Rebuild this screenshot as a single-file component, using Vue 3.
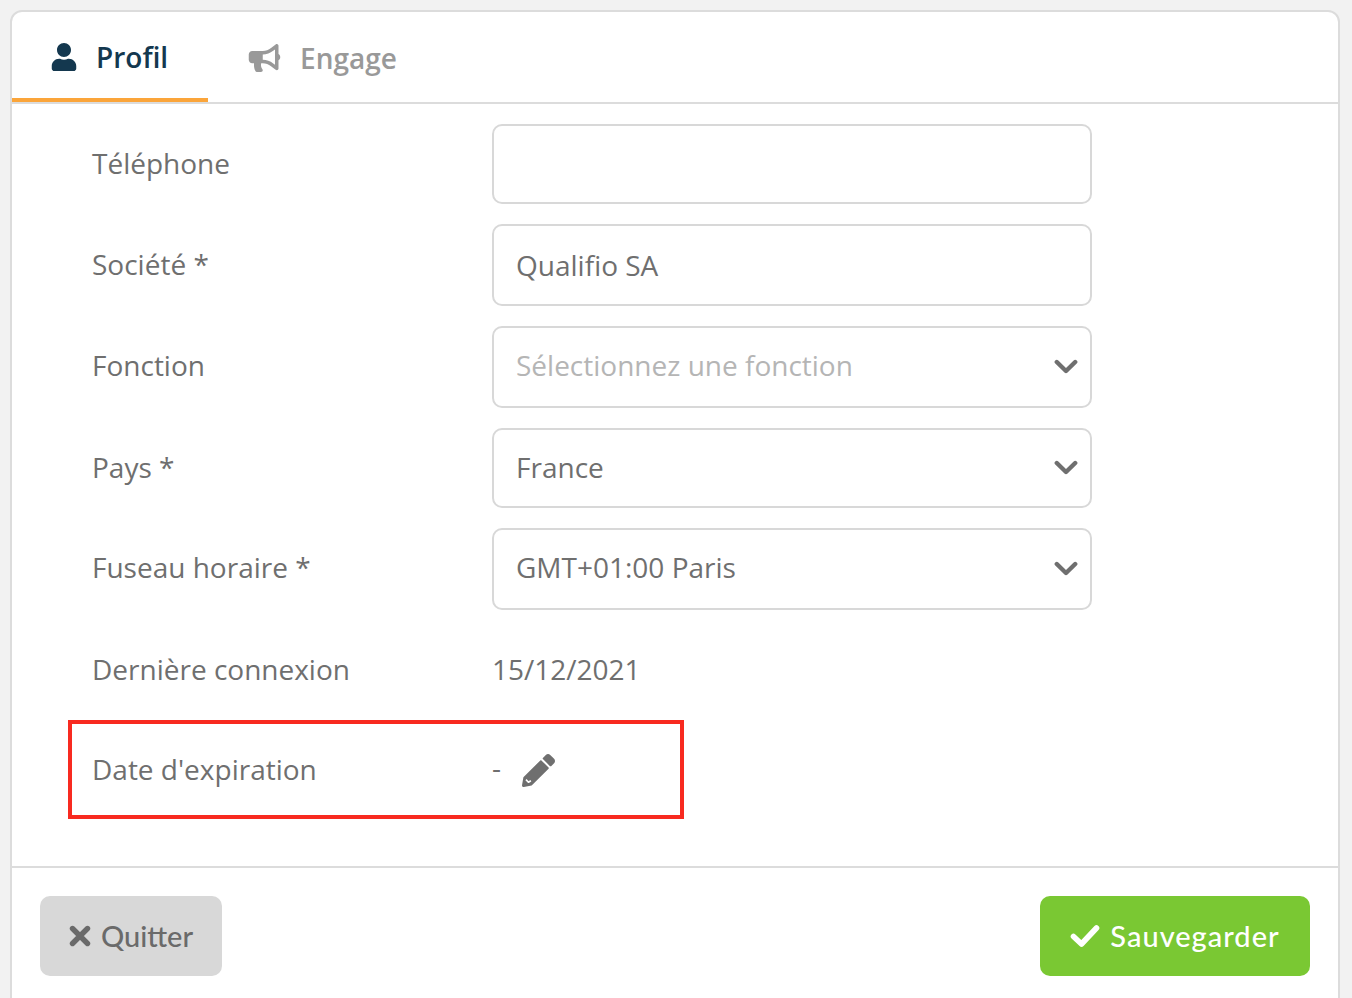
<script setup>
const rows = [
  { label: 'Téléphone', type: 'input', value: '' },
  { label: 'Société *', type: 'input', value: 'Qualifio SA', tall: true, low: true },
  { label: 'Fonction', type: 'select', value: 'Sélectionnez une fonction', placeholder: true, tall: true },
  { label: 'Pays *', type: 'select', value: 'France' },
  { label: 'Fuseau horaire *', type: 'select', value: 'GMT+01:00 Paris', tall: true },
]
</script>

<template>
  <div class="page">
    <section class="card">
      <nav class="tabs">
        <div class="tab active">
          <svg class="tab-icon user" viewBox="0 0 448 512"><path fill="currentColor" d="M224 256c70.700 0 128-57.300 128-128S294.700 0 224 0 96 57.300 96 128s57.300 128 128 128zm89.600 32h-16.700c-22.200 10.200-46.900 16-72.900 16s-50.600-5.800-72.900-16h-16.700C60.200 288 0 348.200 0 422.400V464c0 26.500 21.500 48 48 48h352c26.500 0 48-21.500 48-48v-41.600c0-74.200-60.200-134.400-134.400-134.400z"/></svg>
          <span>Profil</span>
        </div>
        <div class="tab">
          <svg class="tab-icon horn" viewBox="0 0 576 512"><path fill="currentColor" d="M576 240c0-23.630-12.950-44.040-32-55.120V32.010C544 23.260 537.020 0 512 0c-7.120 0-14.190 2.380-19.980 7.020l-85.030 68.030C364.280 109.190 310.660 128 256 128H64c-35.350 0-64 28.650-64 64v96c0 35.350 28.650 64 64 64h33.700c-1.390 10.480-2.180 21.140-2.180 32 0 39.770 9.260 77.350 25.560 110.940 5.190 10.690 16.520 17.060 28.400 17.060h74.280c26.050 0 41.690-29.840 25.900-50.560-16.400-21.520-26.150-48.360-26.150-77.440 0-11.110 1.620-21.790 4.410-32H256c54.660 0 108.280 18.810 150.980 52.950l85.030 68.030a32.023 32.023 0 0 0 19.980 7.020c24.920 0 32-22.760 32-32V295.130C563.050 284.040 576 263.630 576 240zm-96 141.420l-33.050-26.440C392.950 311.780 325.120 288 256 288v-96c69.120 0 136.950-23.780 190.950-66.980L480 98.580v282.840z"/></svg>
          <span>Engage</span>
        </div>
      </nav>

      <div class="form">
        <div v-for="row in rows" :key="row.label" class="row" :class="{ tall: row.tall, low: row.low }">
          <label class="label">{{ row.label }}</label>
          <div class="field" :class="{ placeholder: row.placeholder }">
            <span class="field-text">{{ row.value }}</span>
            <svg v-if="row.type === 'select'" class="chevron" viewBox="0 0 24 16"><path d="M2.800 3 12 12 21.200 3" fill="none" stroke="currentColor" stroke-width="4.400" stroke-linecap="round" stroke-linejoin="round"/></svg>
          </div>
        </div>
        <div class="row static">
          <span class="label">Dernière connexion</span>
          <span class="value">15/12/2021</span>
        </div>
        <div class="row static expire">
          <span class="label">Date d'expiration</span>
          <span class="value dash">-</span>
          <svg class="pencil" viewBox="0 0 512 512">
            <path fill="currentColor" d="M497.900 142.100l-46.100 46.100c-4.700 4.700-12.300 4.700-17 0l-111-111c-4.700-4.700-4.700-12.300 0-17l46.100-46.100c18.700-18.700 49.100-18.700 67.900 0l60.100 60.100c18.800 18.700 18.800 49.100 0 67.900zM284.200 99.800L21.600 362.400.4 483.900c-2.900 16.400 11.400 30.600 27.800 27.800l121.500-21.300 262.600-262.600c4.700-4.700 4.700-12.300 0-17l-111-111c-4.800-4.700-12.400-4.700-17.100 0z"/>
            <path d="M62 398l38 40 38-22" fill="none" stroke="#fff" stroke-width="26" stroke-linejoin="round"/>
          </svg>
          <div class="highlight"></div>
        </div>
      </div>

      <footer class="footer">
        <button class="btn quit">
          <svg class="btn-icon" viewBox="0 0 22 22"><path d="M3.500 3.500l15 15m0-15l-15 15" fill="none" stroke="currentColor" stroke-width="5.400" stroke-linecap="round"/></svg>
          <span class="btn-text">Quitter</span>
        </button>
        <button class="btn save">
          <svg class="btn-icon check" viewBox="0 0 30 24"><path d="M3.500 12.500 11.500 20 26.500 4" fill="none" stroke="currentColor" stroke-width="5.600" stroke-linecap="round" stroke-linejoin="round"/></svg>
          <span class="btn-text save-text">Sauvegarder</span>
        </button>
      </footer>
    </section>
  </div>
</template>

<style>
html, body { margin: 0; background: #f2f2f2; }
</style>

<style scoped>
.page {
  height: 998px;
  overflow: hidden;
  box-sizing: border-box;
  padding: 10px 12px 0 10px;
  font-family: "Open Sans", "Liberation Sans", sans-serif;
  color: #6f6f6f;
}
.card {
  height: 1010px;
  box-sizing: border-box;
  background: #fff;
  border: 2px solid #dcdcdc;
  border-radius: 12px;
  overflow: hidden;
}
.tabs {
  display: flex;
  height: 92px;
  box-sizing: border-box;
  border-bottom: 2px solid #dcdcdc;
}
.tab {
  display: flex;
  align-items: center;
  gap: 19px;
  height: 90px;
  box-sizing: border-box;
  padding: 2px 40px 0;
  font-size: 28px;
  font-weight: 600;
  color: #999;
}
.tab.active {
  width: 196px;
  padding: 4px 0 0 39px;
  color: #14384f;
  border-bottom: 4px solid #fba53a;
}
.tab-icon { flex: none; }
.user { width: 26px; height: 28px; }
.horn { width: 33px; height: 28px; }
.form {
  display: flex;
  flex-direction: column;
  gap: 20px;
  padding: 20px 0 0 80px;
  height: 764px;
  box-sizing: border-box;
  border-bottom: 2px solid #dcdcdc;
}
.row {
  display: grid;
  grid-template-columns: 400px 600px;
  align-items: center;
  height: 80px;
  font-size: 28px;
}
.row.tall { height: 82px; }
.label { color: #6f6f6f; padding-bottom: 2px; }
.tall .label { padding-bottom: 4px; }
.tall.low .label { padding-bottom: 2px; }
.value { padding-bottom: 2px; }
.field {
  height: 100%;
  box-sizing: border-box;
  padding: 0 12px 0 22px;
  display: flex;
  align-items: center;
  justify-content: space-between;
  border: 2px solid #d8d8d8;
  border-radius: 10px;
  background: #fff;
}
.field-text { padding-bottom: 2px; }
.tall .field-text { padding-bottom: 4px; }
.tall.low .field-text { padding-bottom: 0; }
.placeholder span { color: #b5b5b5; }
.chevron { width: 24px; height: 16px; color: #6f6f6f; margin-bottom: 1px; }
.static { position: relative; }
.expire {
  grid-template-columns: 400px 30px 36px;
}
.dash { color: #6f6f6f; padding-bottom: 6px; }
.pencil { width: 33px; height: 33px; color: #6f6f6f; }
.highlight {
  position: absolute;
  left: -24px;
  top: -10px;
  width: 616px;
  height: 99px;
  box-sizing: border-box;
  border: 4px solid #f82a20;
}
.footer {
  display: flex;
  justify-content: space-between;
  padding: 28px 28px 0;
}
.btn {
  display: flex;
  align-items: center;
  justify-content: center;
  gap: 10px;
  height: 80px;
  border: 0;
  border-radius: 10px;
  padding: 0;
  font-family: "Lato", "Open Sans", sans-serif;
  font-size: 29px;
  font-weight: 500;
}
.btn-text { padding-bottom: 2px; }
.quit { width: 182px; background: #d8d8d8; color: #6a6a6a; }
.save { width: 270px; background: #7ac833; color: #fff; }
.save-text { letter-spacing: 1px; }
.btn-icon { width: 22px; height: 22px; }
.check { width: 30px; height: 24px; }
</style>
